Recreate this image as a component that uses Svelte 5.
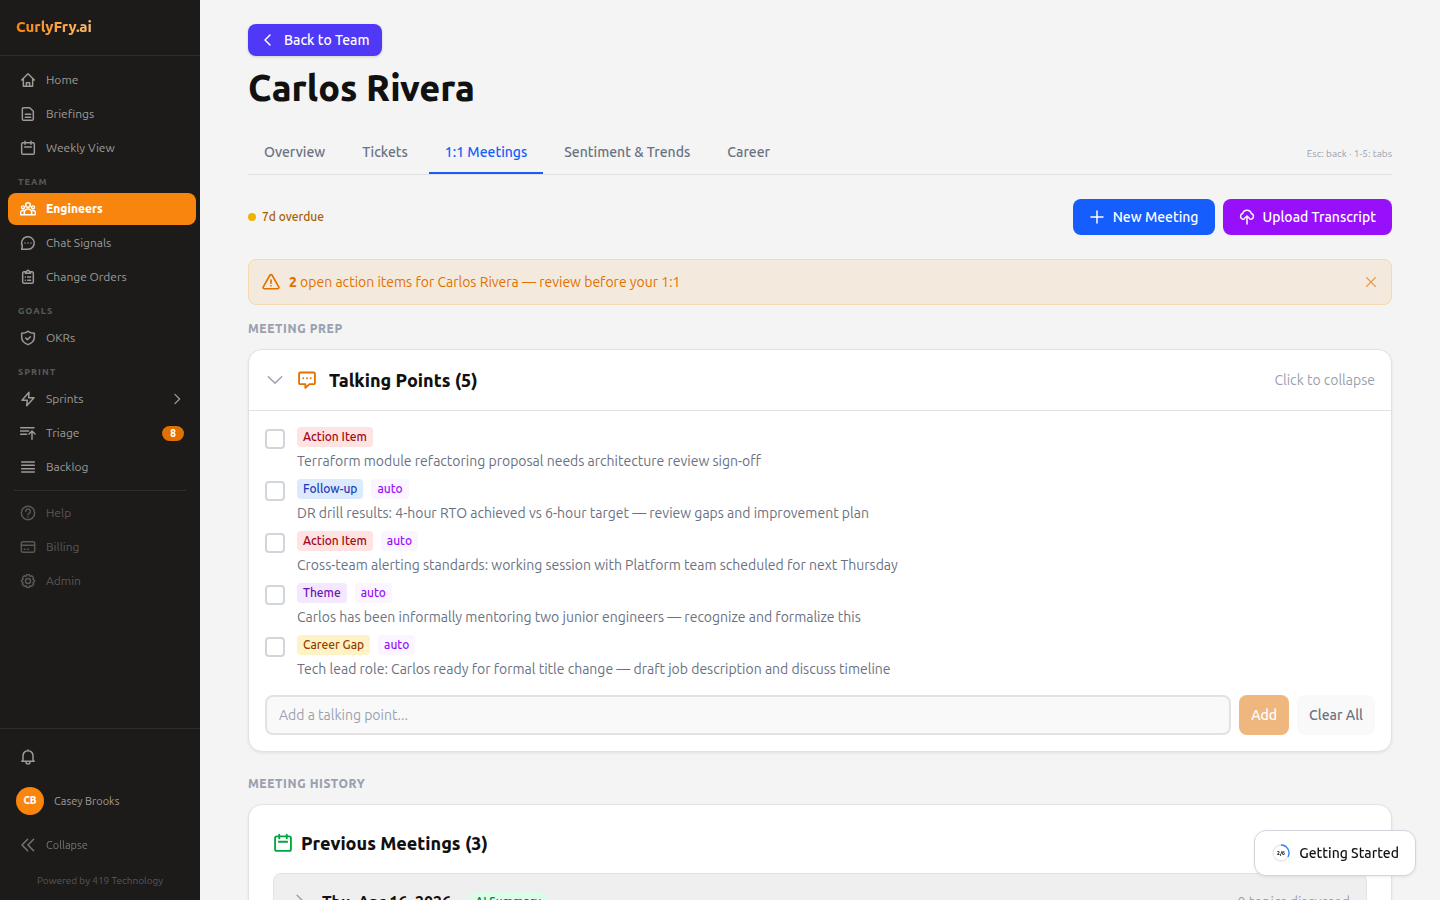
<script lang="ts">
	interface NavItem {
		label: string;
		icon: string;
		active?: boolean;
		badge?: number;
		expandable?: boolean;
	}

	interface NavSection {
		title?: string;
		items: NavItem[];
	}

	interface TalkingPoint {
		id: number;
		kind: string;
		tone: 'red' | 'blue' | 'purple' | 'amber';
		auto: boolean;
		text: string;
		done: boolean;
	}

	const SECTIONS: NavSection[] = [
		{
			items: [
				{ label: 'Home', icon: 'home' },
				{ label: 'Briefings', icon: 'document' },
				{ label: 'Weekly View', icon: 'calendar' }
			]
		},
		{
			title: 'Team',
			items: [
				{ label: 'Engineers', icon: 'group', active: true },
				{ label: 'Chat Signals', icon: 'chat' },
				{ label: 'Change Orders', icon: 'clipboard' }
			]
		},
		{ title: 'Goals', items: [{ label: 'OKRs', icon: 'shield' }] },
		{
			title: 'Sprint',
			items: [
				{ label: 'Sprints', icon: 'bolt', expandable: true },
				{ label: 'Triage', icon: 'triage', badge: 8 },
				{ label: 'Backlog', icon: 'list' }
			]
		}
	];

	const SECONDARY: NavItem[] = [
		{ label: 'Help', icon: 'help' },
		{ label: 'Billing', icon: 'card' },
		{ label: 'Admin', icon: 'gear' }
	];

	const TABS = ['Overview', 'Tickets', '1:1 Meetings', 'Sentiment & Trends', 'Career'];

	let activeTab = $state('1:1 Meetings');
	let bannerOpen = $state(true);
	let pointsOpen = $state(true);
	let draft = $state('');

	let points: TalkingPoint[] = $state([
		{ id: 1, kind: 'Action Item', tone: 'red', auto: false, done: false, text: 'Terraform module refactoring proposal needs architecture review sign-off' },
		{ id: 2, kind: 'Follow-up', tone: 'blue', auto: true, done: false, text: 'DR drill results: 4-hour RTO achieved vs 6-hour target — review gaps and improvement plan' },
		{ id: 3, kind: 'Action Item', tone: 'red', auto: true, done: false, text: 'Cross-team alerting standards: working session with Platform team scheduled for next Thursday' },
		{ id: 4, kind: 'Theme', tone: 'purple', auto: true, done: false, text: 'Carlos has been informally mentoring two junior engineers — recognize and formalize this' },
		{ id: 5, kind: 'Career Gap', tone: 'amber', auto: true, done: false, text: 'Tech lead role: Carlos ready for formal title change — draft job description and discuss timeline' }
	]);

	function addPoint(event: SubmitEvent) {
		event.preventDefault();
		const text = draft.trim();
		if (!text) return;
		points.push({ id: Date.now(), kind: 'Follow-up', tone: 'blue', auto: false, done: false, text });
		draft = '';
	}
</script>

{#snippet icon(name: string, size = 'sm')}
	<svg class="icon {size}" viewBox="0 0 24 24" aria-hidden="true">
		{#if name === 'home'}
			<path d="M2.500 12 12 2.500 21.500 12M5 10v11.500h14V10M9.500 21.500v-5.500h5v5.500" />
		{:else if name === 'document'}
			<path d="M5.500 2.500h9L20 8v11.500a2 2 0 0 1-2 2H5.500a2 2 0 0 1-2-2v-15a2 2 0 0 1 2-2zM8 12.500h8M8 17h8" />
		{:else if name === 'calendar'}
			<rect x="2.500" y="4" width="19" height="17.500" rx="2" />
			<path d="M7.500 2v4.500M16.500 2v4.500M7 10.500h10" />
		{:else if name === 'group'}
			<circle cx="12" cy="6" r="3.500" />
			<circle cx="4.500" cy="9.500" r="2.200" />
			<circle cx="19.500" cy="9.500" r="2.200" />
			<path d="M6.500 20.500v-3a5.500 5.500 0 0 1 11 0v3zM6.500 20.500h-5.500v-3c0-2 1.500-3.200 3.500-3.200 1.200 0 2 .3 2.700.9M17.500 20.500H23v-3c0-2-1.500-3.200-3.500-3.200-1.200 0-2 .3-2.700.9" />
		{:else if name === 'chat'}
			<path d="M2.500 21.500h9.500A9.500 9.500 0 1 0 3.500 16.500zM7.500 12h.01M12 12h.01M16.500 12h.01" />
		{:else if name === 'clipboard'}
			<path d="M8 4H6a2 2 0 0 0-2 2v13.500a2 2 0 0 0 2 2h12a2 2 0 0 0 2-2V6a2 2 0 0 0-2-2h-2M8 6.500V4h2a2 2 0 0 1 4 0h2v2.500zM8 12h.01M11.500 12h4.500M8 17h.01M11.500 17h4.500" />
		{:else if name === 'shield'}
			<path d="M12 2c3 2 6 3 9.500 3v6c0 5.500-4 9-9.500 11C6.500 20 2.500 16.500 2.500 11V5C6 5 9 4 12 2zM8.500 12l2.500 2.500 4.500-4.500" />
		{:else if name === 'bolt'}
			<path d="M13.500 2 3 14h8l-1 8L21 10h-8z" />
		{:else if name === 'triage'}
			<path d="M1 4h20M1 9h12M1 14h9M18 21.500V9M13.500 13.500 18 9l4.500 4.500" />
		{:else if name === 'list'}
			<path d="M2.500 4.500h19M2.500 9.500h19M2.500 14.500h19M2.500 19.500h19" />
		{:else if name === 'help'}
			<circle cx="12" cy="12" r="10" />
			<path d="M8.500 9.500a3.500 3.500 0 1 1 5.300 3c-1.200.8-1.800 1.200-1.800 2.200M12 18h.01" />
		{:else if name === 'card'}
			<rect x="2" y="4" width="20" height="16" rx="2.500" />
			<path d="M2 9.500h20M6.500 15.500h1M11.500 15.500h1" />
		{:else if name === 'gear'}
			<circle cx="12" cy="12" r="3.800" />
			<path d="M9.800 2.500h4.400l.8 2.500 2.600-.8 2.800 3-1 2.500 2.300 1.300v2l-2.300 1.300 1 2.500-2.800 3-2.600-.8-.8 2.500H9.800L9 19l-2.600.8-2.800-3 1-2.500L2.300 13v-2l2.300-1.300-1-2.500 2.800-3L9 5z" />
		{:else if name === 'bell'}
			<path d="M2.500 18.500h19M4.500 18.500V10a7.500 7.500 0 0 1 15 0v8.500M9 19.500a3 3 0 0 0 6 0M12 1.500v1" />
		{:else if name === 'collapse'}
			<path d="M11.500 3.500 3 12l8.500 8.500M20.500 3.500 12 12l8.500 8.500" />
		{:else if name === 'chevron-left'}
			<path d="m15 4.500-7.500 7.500 7.500 7.500" />
		{:else if name === 'chevron-right'}
			<path d="m8.500 4 8 8-8 8" />
		{:else if name === 'chevron-down'}
			<path d="m4 8 8 8 8-8" />
		{:else if name === 'plus'}
			<path d="M12 3v18M3 12h18" />
		{:else if name === 'upload'}
			<path d="M7.500 15.500H6A4.500 4.500 0 0 1 5.500 6.800a6.700 6.700 0 0 1 13 0A4.500 4.500 0 0 1 18 15.500h-1.500M12 22.500V11M8.500 14l3.500-3.500 3.500 3.500" />
		{:else if name === 'warning'}
			<path d="M10.500 3a1.700 1.700 0 0 1 3 0l8.800 15.500a1.700 1.700 0 0 1-1.500 2.500H3.200a1.700 1.700 0 0 1-1.500-2.500zM12 9.500v4M12 17v.1" />
		{:else if name === 'close'}
			<path d="m4.500 4.500 15 15M19.500 4.500l-15 15" />
		{:else if name === 'comment'}
			<path d="M4 3h16a1.500 1.500 0 0 1 1.500 1.500v11A1.500 1.500 0 0 1 20 17h-5l-5 4.500V17H4a1.500 1.500 0 0 1-1.500-1.500v-11A1.500 1.500 0 0 1 4 3zM7.500 9.700v.3M12 9.700v.3M16.500 9.700v.3" />
		{/if}
	</svg>
{/snippet}

{#snippet navLink(item: NavItem)}
	<a class="nav-link" class:active={item.active} href="#{item.icon}" aria-current={item.active ? 'page' : undefined}>
		{@render icon(item.icon)}
		<span class="nav-text">{item.label}</span>
		{#if item.badge}<span class="count">{item.badge}</span>{/if}
		{#if item.expandable}{@render icon('chevron-right', 'xs')}{/if}
	</a>
{/snippet}

<div class="app">
	<aside class="sidebar">
		<div class="brand"><span>CurlyFry.ai</span></div>

		<nav class="nav" aria-label="Main">
			{#each SECTIONS as section}
				{#if section.title}<h2 class="nav-title">{section.title}</h2>{/if}
				<div class="nav-group">
					{#each section.items as item}
						{@render navLink(item)}
					{/each}
				</div>
			{/each}
			<hr class="nav-rule" />
			<div class="nav-group muted">
				{#each SECONDARY as item}
					{@render navLink(item)}
				{/each}
			</div>
		</nav>

		<div class="side-foot">
			<button class="side-button" type="button" aria-label="Notifications">{@render icon('bell')}</button>
			<button class="user" type="button">
				<span class="avatar">CB</span>
				<span>Casey Brooks</span>
			</button>
			<button class="side-button dim" type="button">{@render icon('collapse')}<span>Collapse</span></button>
			<p class="powered">Powered by 419 Technology</p>
		</div>
	</aside>

	<main class="main">
		<button class="back" type="button">{@render icon('chevron-left')}Back to Team</button>
		<h1>Carlos Rivera</h1>

		<div class="tab-bar">
			<div class="tabs" role="tablist">
				{#each TABS as tab}
					<button
						class="tab"
						class:selected={tab === activeTab}
						type="button"
						role="tab"
						aria-selected={tab === activeTab}
						onclick={() => (activeTab = tab)}>{tab}</button>
				{/each}
			</div>
			<span class="hint">Esc: back · 1-5: tabs</span>
		</div>

		<div class="toolbar">
			<span class="overdue"><i class="dot"></i>7d overdue</span>
			<div class="actions">
				<button class="action blue" type="button">{@render icon('plus')}New Meeting</button>
				<button class="action violet" type="button">{@render icon('upload')}Upload Transcript</button>
			</div>
		</div>

		{#if bannerOpen}
			<div class="banner" role="status">
				{@render icon('warning', 'md')}
				<p><strong>2</strong> open action items for Carlos Rivera — review before your 1:1</p>
				<button class="dismiss" type="button" aria-label="Dismiss" onclick={() => (bannerOpen = false)}>
					{@render icon('close', 'xs')}
				</button>
			</div>
		{/if}

		<h2 class="section-title">Meeting Prep</h2>
		<section class="card">
			<button class="card-head" type="button" aria-expanded={pointsOpen} onclick={() => (pointsOpen = !pointsOpen)}>
				<span class="chevron">{@render icon('chevron-down', 'lg')}</span>
				<span class="comment">{@render icon('comment', 'lg')}</span>
				<span class="card-title">Talking Points ({points.length})</span>
				<span class="toggle">Click to {pointsOpen ? 'collapse' : 'expand'}</span>
			</button>

			{#if pointsOpen}
				<div class="card-body">
					<ul class="points">
						{#each points as point (point.id)}
							<li class="point">
								<input class="check" id="point-{point.id}" type="checkbox" bind:checked={point.done} />
								<label for="point-{point.id}">
									<span class="tags">
										<span class="tag {point.tone}">{point.kind}</span>
										{#if point.auto}<span class="tag auto">auto</span>{/if}
									</span>
									<span class="point-text">{point.text}</span>
								</label>
							</li>
						{/each}
					</ul>
					<form class="add-row" onsubmit={addPoint}>
						<input class="field" type="text" placeholder="Add a talking point..." aria-label="Add a talking point" bind:value={draft} />
						<button class="add" type="submit" disabled={!draft.trim()}>Add</button>
						<button class="clear" type="button" onclick={() => (points = [])}>Clear All</button>
					</form>
				</div>
			{/if}
		</section>

		<h2 class="section-title history-title">Meeting History</h2>
		<section class="card history">
			<h3 class="history-head">{@render icon('calendar', 'lg')}Previous Meetings (3)</h3>
			<button class="meeting" type="button" aria-expanded="false">
				{@render icon('chevron-right', 'lg')}
				<span class="date">Thu, Apr 16, 2026</span>
				<span class="summary">AI Summary</span>
				<span class="topics">0 topics discussed</span>
			</button>
		</section>
	</main>

	<button class="getting-started" type="button">
		<svg class="ring" viewBox="0 0 20 20" aria-hidden="true">
			<circle class="track" cx="10" cy="10" r="8" />
			<path class="progress" d="M10 2A8 8 0 0 1 16.930 14" />
			<text x="10" y="12">2/6</text>
		</svg>
		Getting Started
	</button>
</div>

<style>
	:global(body) {
		background: #f4f4f4;
	}

	.app {
		display: flex;
		height: 100vh;
		overflow: hidden;
		color: #111;
		font-family: Ubuntu, 'Noto Sans', sans-serif;
		font-size: 14px;
		line-height: 20px;
	}

	.app :is(button, input) {
		box-sizing: border-box;
		font: inherit;
	}

	.app button {
		display: flex;
		align-items: center;
		padding: 0;
		border: none;
		background: none;
		color: inherit;
		white-space: nowrap;
		cursor: pointer;
	}

	h1,
	h2,
	h3,
	p,
	ul {
		margin: 0;
		padding: 0;
	}

	strong {
		font-weight: 800;
	}

	.icon {
		flex: none;
		width: 16px;
		height: 16px;
		fill: none;
		stroke: currentColor;
		stroke-width: 2.2;
		stroke-linecap: round;
		stroke-linejoin: round;
	}

	.icon.xs {
		width: 14px;
		height: 14px;
	}

	.icon.md {
		width: 18px;
		height: 18px;
	}

	.icon.lg {
		width: 20px;
		height: 20px;
	}

	.sidebar {
		display: flex;
		flex: 0 0 200px;
		flex-direction: column;
		background: #1c1b19;
		color: #9c9b98;
		font-size: 12px;
	}

	.brand {
		padding: 17px 16px 18px;
		border-bottom: 1px solid #2f2e2c;
		font-size: 15px;
		font-weight: 800;
	}

	.brand span {
		background: linear-gradient(90deg, #f8850d, #fdba74);
		background-clip: text;
		color: transparent;
	}

	.nav {
		flex: 1;
		padding: 8px 4px 8px 8px;
	}

	.nav-group {
		display: flex;
		flex-direction: column;
		gap: 2px;
	}

	.nav-title {
		padding: 12px 10px 5px;
		color: #585754;
		font-size: 9px;
		font-weight: 800;
		letter-spacing: 1px;
		line-height: 12px;
		text-transform: uppercase;
	}

	.nav-link {
		display: flex;
		gap: 10px;
		align-items: center;
		height: 32px;
		padding: 0 12px;
		border-radius: 8px;
		color: inherit;
		text-decoration: none;
	}

	.nav-link.active {
		background: #f8850d;
		color: #fff;
		font-weight: 800;
	}

	.nav-text {
		flex: 1;
	}

	.count {
		padding: 0 8px;
		border-radius: 8px;
		background: #e17100;
		color: #fff;
		font-size: 10px;
		font-weight: 800;
		line-height: 15px;
	}

	.nav-rule {
		height: 1px;
		margin: 7px 10px 6px 6px;
		border: none;
		background: #2f2e2c;
	}

	.muted {
		color: #595855;
	}

	.side-foot {
		display: flex;
		flex-direction: column;
		padding: 12px 8px 11px;
		border-top: 1px solid #2f2e2c;
		font-size: 11px;
	}

	.sidebar .side-button {
		gap: 10px;
		height: 32px;
		padding: 0 12px;
	}

	.sidebar .user {
		gap: 10px;
		height: 56px;
		padding: 0 8px;
	}

	.avatar {
		width: 28px;
		border-radius: 50%;
		background: #f8850d;
		color: #fff;
		font-size: 10px;
		font-weight: 800;
		line-height: 28px;
		text-align: center;
	}

	.dim {
		opacity: 0.7;
	}

	.powered {
		padding-top: 12px;
		color: #595855;
		font-size: 10px;
		line-height: 16px;
		text-align: center;
	}

	.main {
		flex: 1;
		min-width: 0;
		padding: 24px 48px;
		overflow-y: auto;
		background: #f4f4f4;
		scrollbar-width: none;
	}

	.main .back {
		gap: 8px;
		height: 32px;
		padding: 0 12px;
		border-radius: 8px;
		background: #4f39f6;
		box-shadow: 0 1px 3px rgb(0 0 0 / 15%);
		color: #fff;
		font-weight: 500;
	}

	h1 {
		padding: 12px 0 20px;
		font-size: 36px;
		font-weight: 800;
		line-height: 40px;
	}

	.tab-bar {
		display: flex;
		align-items: center;
		justify-content: space-between;
		margin-bottom: 24px;
		border-bottom: 1px solid #e0e0e0;
	}

	.tabs {
		display: flex;
		gap: 5px;
	}

	.tabs .tab {
		height: 46px;
		padding: 4px 16px 0;
		border-bottom: 2px solid transparent;
		color: #6a7282;
		font-weight: 500;
	}

	.tabs .tab.selected {
		border-color: #155dfc;
		color: #155dfc;
	}

	.hint {
		padding-top: 6px;
		color: #99a1af;
		font-size: 10px;
	}

	.toolbar,
	.actions {
		display: flex;
		align-items: center;
	}

	.toolbar {
		justify-content: space-between;
		margin-bottom: 24px;
	}

	.overdue {
		display: flex;
		gap: 6px;
		align-items: center;
		color: #a65f00;
		font-size: 12px;
		font-weight: 500;
	}

	.dot {
		width: 8px;
		height: 8px;
		border-radius: 50%;
		background: #f0b100;
	}

	.actions {
		gap: 8px;
	}

	.actions .action {
		gap: 8px;
		height: 36px;
		padding: 0 16px;
		border-radius: 8px;
		color: #fff;
		font-weight: 500;
	}

	.actions .blue {
		background: #155dfc;
	}

	.actions .violet {
		background: #9810fa;
	}

	.banner {
		display: flex;
		gap: 9px;
		align-items: center;
		padding: 12px 13px;
		border: 1px solid #f6d9af;
		border-radius: 8px;
		background: #f3e9dc;
		color: #e17100;
	}

	.banner p {
		flex: 1;
	}

	.banner .dismiss {
		opacity: 0.7;
	}

	.section-title {
		padding: 16px 0 12px;
		color: #99a1af;
		font-size: 12px;
		font-weight: 800;
		letter-spacing: 0.05em;
		line-height: 16px;
		text-transform: uppercase;
	}

	.history-title {
		padding-top: 24px;
	}

	.card {
		border: 1px solid #e2e2e2;
		border-radius: 14px;
		background: #fff;
		box-shadow: 0 1px 3px rgb(0 0 0 / 8%);
	}

	.card .card-head {
		gap: 12px;
		width: 100%;
		height: 60px;
		padding: 0 16px;
		text-align: left;
	}

	.chevron {
		display: flex;
		color: #99a1af;
	}

	.chevron .icon {
		stroke-width: 1.7;
	}

	.comment {
		display: flex;
		color: #e17100;
	}

	.card-title,
	.history-head {
		font-size: 18px;
		font-weight: 800;
		line-height: 28px;
	}

	.toggle {
		margin-left: auto;
		color: #99a1af;
	}

	.card-body {
		padding: 16px;
		border-top: 1px solid #e2e2e2;
	}

	.points {
		display: flex;
		flex-direction: column;
		gap: 8px;
		list-style: none;
	}

	.point {
		display: flex;
		gap: 12px;
		align-items: flex-start;
	}

	.point label {
		display: flex;
		flex-direction: column;
		gap: 4px;
	}

	.check {
		flex: none;
		appearance: none;
		width: 20px;
		height: 20px;
		margin: 2px 0 0;
		border: 2px solid #d1d5dc;
		border-radius: 4px;
		background: #fff;
	}

	.check:checked {
		background: #155dfc;
	}

	.tags {
		display: flex;
		gap: 8px;
	}

	.tag {
		padding: 0 6px;
		border-radius: 4px;
		font-size: 12px;
		font-weight: 500;
	}

	.tag.red {
		background: #ffe2e2;
		color: #9f0712;
	}

	.tag.blue {
		background: #dbeafe;
		color: #193cb8;
	}

	.tag.purple {
		background: #f3e8ff;
		color: #6e11b0;
	}

	.tag.amber {
		background: #fef3c6;
		color: #973c00;
	}

	.tag.auto {
		background: #faf5ff;
		color: #9810fa;
	}

	.point-text {
		color: #6a7282;
	}

	.add-row {
		display: flex;
		gap: 8px;
		margin-top: 16px;
	}

	.field {
		flex: 1;
		min-width: 0;
		height: 40px;
		padding: 0 12px;
		border: 2px solid #e2e2e2;
		border-radius: 8px;
		background: #f9f9f9;
		color: #111;
	}

	.field::placeholder {
		color: #99a1af;
	}

	.add-row button {
		padding: 0 12px;
		border-radius: 8px;
		background: #f9f9f9;
		color: #6a7282;
		font-weight: 500;
	}

	.add-row .add {
		background: #e17100;
		color: #fff;
	}

	.add-row .add:disabled {
		opacity: 0.5;
		cursor: default;
	}

	.history {
		padding: 24px;
	}

	.history-head {
		display: flex;
		gap: 8px;
		align-items: center;
		margin-bottom: 16px;
	}

	.history-head .icon {
		stroke: #00a63e;
	}

	.history .meeting {
		gap: 12px;
		width: 100%;
		padding: 16px;
		border: 1px solid #e2e2e2;
		border-radius: 8px;
		background: #efefef;
	}

	.meeting .icon {
		stroke: #99a1af;
		stroke-width: 1.7;
	}

	.date {
		font-size: 16px;
		font-weight: 600;
		line-height: 24px;
	}

	.summary {
		margin-left: 4px;
		padding: 0 8px;
		border-radius: 10px;
		background: #dcfce7;
		color: #008236;
		font-size: 12px;
		font-weight: 500;
	}

	.topics {
		margin-left: auto;
		color: #99a1af;
	}

	.app .getting-started {
		position: fixed;
		right: 24px;
		bottom: 24px;
		gap: 8px;
		height: 46px;
		padding: 0 16px;
		border: 1px solid #d1d5dc;
		border-radius: 12px;
		background: #fff;
		box-shadow: 0 1px 3px rgb(0 0 0 / 8%);
		font-weight: 500;
	}

	.ring {
		width: 20px;
		height: 20px;
	}

	.track,
	.progress {
		fill: none;
		stroke: #e5e7eb;
		stroke-width: 1.3;
	}

	.progress {
		stroke: #2b7fff;
	}

	.ring text {
		fill: #111;
		font-size: 5px;
		font-weight: 800;
		text-anchor: middle;
	}
</style>
